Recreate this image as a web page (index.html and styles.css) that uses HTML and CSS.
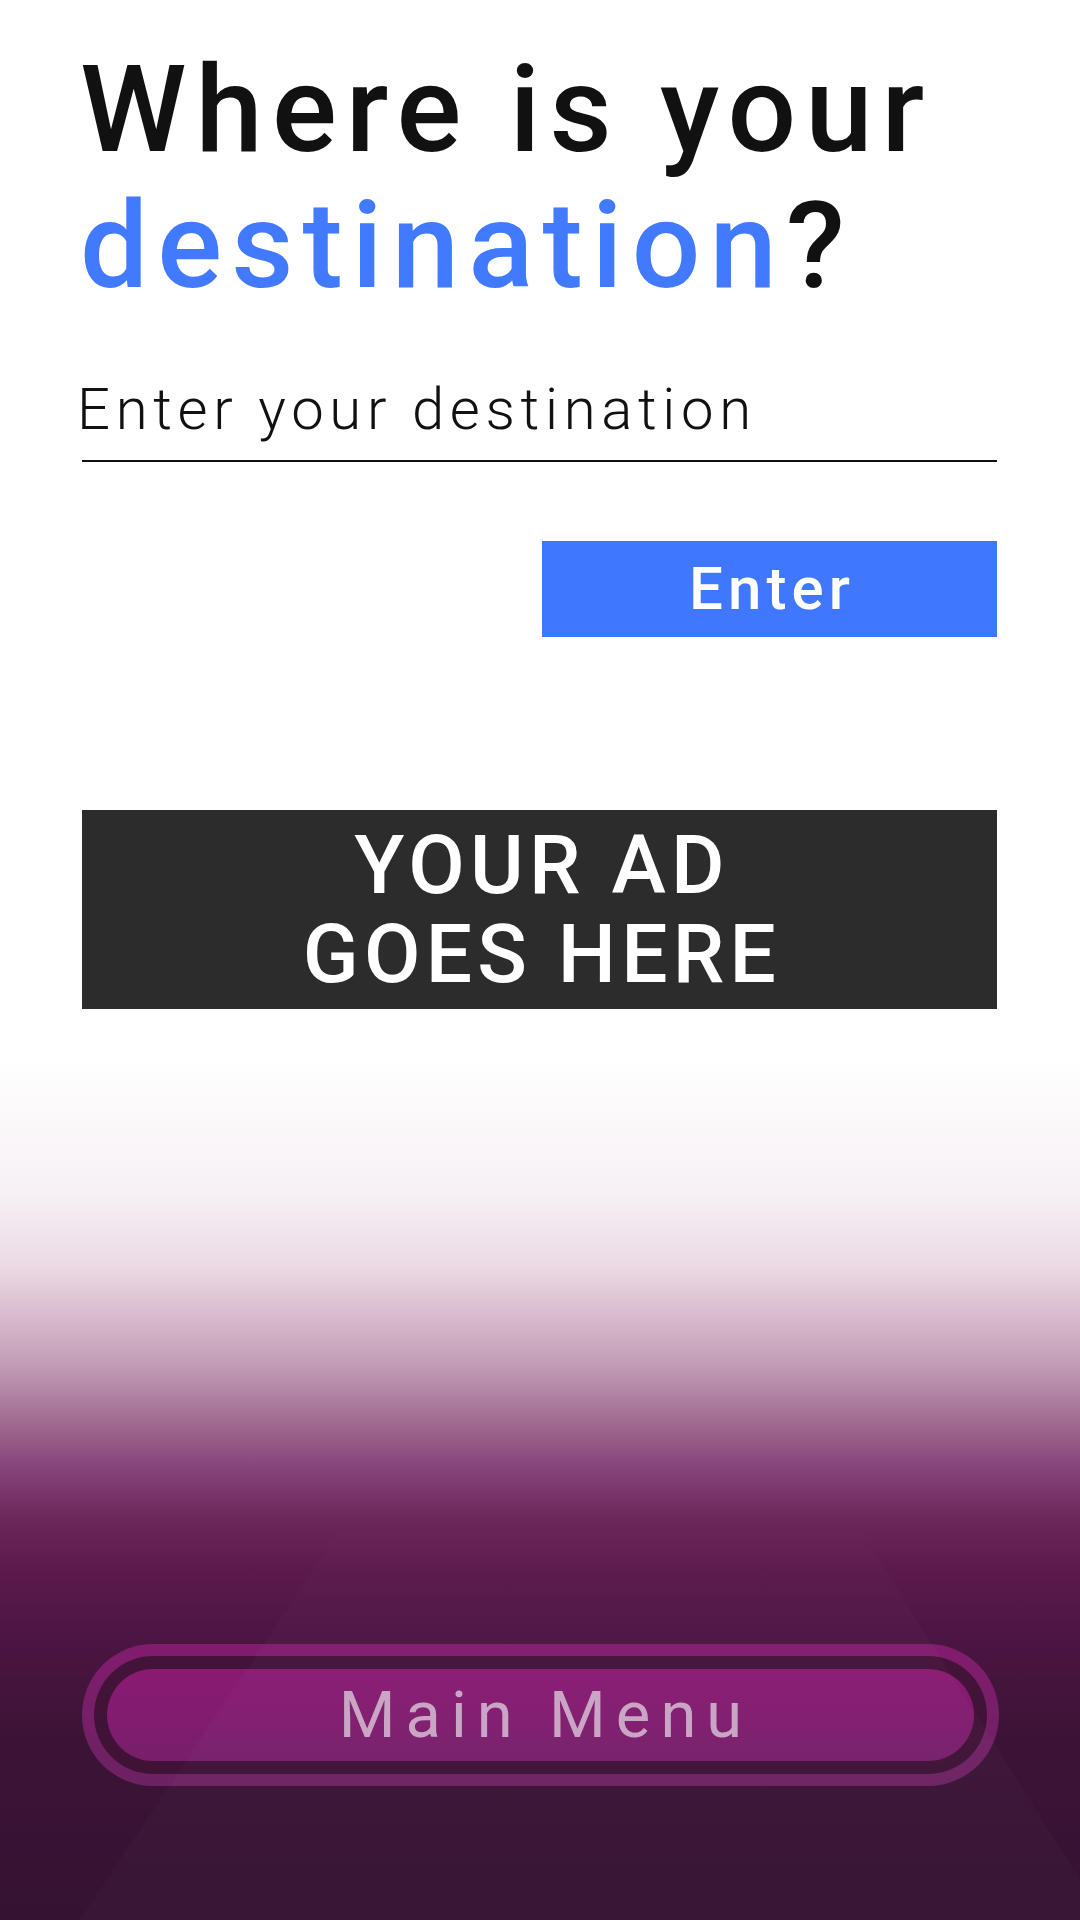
FILE: index.html
```html
<!DOCTYPE html>
<html lang="en">
<head>
<meta charset="utf-8">
<title>Where is your destination?</title>
<link rel="stylesheet" href="styles.css">
</head>
<body>
<div class="beam" aria-hidden="true"></div>
<main class="page">
  <h1 class="title">Where is your<br><span class="accent">destination</span>?</h1>
  <div class="field"><span class="placeholder">Enter your destination</span></div>
  <button class="enter-btn" type="button">Enter</button>
  <div class="ad"><span>YOUR AD</span><span>GOES HERE</span></div>
  <div class="menu-wrap">
    <div class="menu-ring">
      <button class="menu-btn" type="button">Main Menu</button>
    </div>
  </div>
</main>
</body>
</html>
```

FILE: styles.css
```css
html, body {
  margin: 0;
  padding: 0;
}

body {
  width: 1080px;
  height: 1920px;
  overflow: hidden;
  position: relative;
  font-family: Roboto, "Liberation Sans", sans-serif;
  background: linear-gradient(to bottom,
    #ffffff 0px,
    #ffffff 1060px,
    #f7f1f5 1190px,
    #ebdbe5 1265px,
    #d7bacc 1318px,
    #c09ab4 1368px,
    #a26f93 1418px,
    #85447a 1468px,
    #6c2658 1520px,
    #5b1a4b 1572px,
    #4c1542 1636px,
    #3c1337 1740px,
    #351232 1920px);
}

.beam {
  position: absolute;
  left: 0;
  top: 0;
  width: 1080px;
  height: 1920px;
  pointer-events: none;
  clip-path: polygon(340px 1530px, 860px 1530px, 1080px 1880px, 1080px 1920px, 80px 1920px);
  background: linear-gradient(to bottom, rgba(255,255,255,0) 1500px, rgba(255,255,255,0.018) 1640px, rgba(255,255,255,0.015) 1920px);
  z-index: 2;
}

.page {
  position: relative;
  z-index: 1;
  display: flex;
  flex-direction: column;
  padding: 42px 83px 0 82px;
}

.title {
  margin: 0 0 0 -2px;
  font-size: 121px;
  line-height: 136px;
  font-weight: 500;
  letter-spacing: 0.075em;
  color: #111111;
  white-space: nowrap;
}

.accent {
  color: #4179ff;
}

.field {
  margin-top: 61px;
  padding-bottom: 17px;
  border-bottom: 2px solid #111111;
}

.placeholder {
  display: block;
  margin-left: -5px;
  font-size: 58px;
  line-height: 68px;
  font-weight: 300;
  letter-spacing: 0.098em;
  color: #111111;
  white-space: nowrap;
}

.enter-btn {
  align-self: flex-end;
  margin-top: 79px;
  width: 455px;
  height: 96px;
  border: 0;
  border-radius: 0;
  padding: 0 0 0 5px;
  background: #3f78ff;
  color: #ffffff;
  font-family: Roboto, "Liberation Sans", sans-serif;
  font-size: 60px;
  font-weight: 500;
  letter-spacing: 0.085em;
  line-height: 1;
}

.ad {
  margin-top: 173px;
  height: 199px;
  background: #2c2c2c;
  color: #ffffff;
  display: flex;
  flex-direction: column;
  align-items: center;
  justify-content: center;
  padding-left: 5px;
  font-size: 82px;
  line-height: 89px;
  font-weight: 500;
  letter-spacing: 0.064em;
}

.menu-wrap {
  margin-top: 635px;
  display: flex;
}

.menu-ring {
  flex: 1;
  margin-right: -2px;
  border: 12px solid transparent;
  border-radius: 999px;
  padding: 13px;
  background:
    linear-gradient(#44133a, #3f1236) padding-box,
    linear-gradient(to bottom, #821c6e, #6b2262) border-box;
}

.menu-btn {
  display: block;
  width: 100%;
  height: 92px;
  border: 0;
  border-radius: 999px;
  padding: 0 0 0 10px;
  background: linear-gradient(to bottom, #8a1a73 0%, #821c6f 45%, #771f6a 100%);
  color: #c9a3c5;
  font-family: Roboto, "Liberation Sans", sans-serif;
  font-size: 65px;
  font-weight: 400;
  letter-spacing: 0.155em;
  line-height: 1;
}
```
